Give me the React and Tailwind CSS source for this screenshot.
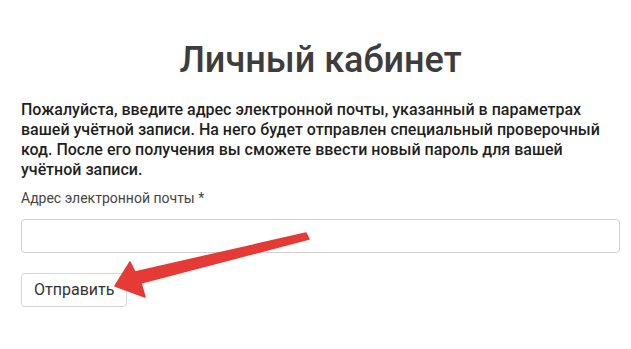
export default function App() {
    return (
        <div className="relative min-h-[349px] bg-white pl-[21px] pr-[11px] pt-[38px] font-['Roboto',sans-serif]">
            <h1 className="text-center text-[36px] font-medium leading-[44px] text-[#3d3d3d]">
                Личный кабинет
            </h1>

            <p className="mt-[18px] max-w-[580px] text-[16px] font-medium leading-[20px] text-[#1f1f1f]">
                Пожалуйста, введите адрес электронной почты, указанный в параметрах вашей учётной
                записи. На него будет отправлен специальный проверочный код. После его получения вы
                сможете ввести новый пароль для вашей учётной записи.
            </p>

            <form className="mt-[10px]">
                <label htmlFor="email" className="block text-[14px] leading-[17px] text-[#444]">
                    Адрес электронной почты *
                </label>
                <input
                    id="email"
                    type="email"
                    className="mt-[12px] block h-[34px] w-full rounded-[4px] border border-[#cfcfcf] px-3"
                />
                <button
                    type="button"
                    className="mt-[20px] h-[34px] rounded-[4px] border border-[#d6d6d6] bg-white px-[12px] text-[16px] text-[#333]"
                >
                    Отправить
                </button>
            </form>

            {/* red pointer drawn over the form */}
            <svg
                className="pointer-events-none absolute left-0 top-0"
                width="631"
                height="349"
                viewBox="0 0 631 349"
            >
                <polygon
                    points="306,233 309,239 141,283 145,297 115,286 130,262 135,272"
                    fill="#e53a35"
                    stroke="#e53a35"
                    strokeWidth="1.5"
                    strokeLinejoin="round"
                />
            </svg>
        </div>
    );
}
